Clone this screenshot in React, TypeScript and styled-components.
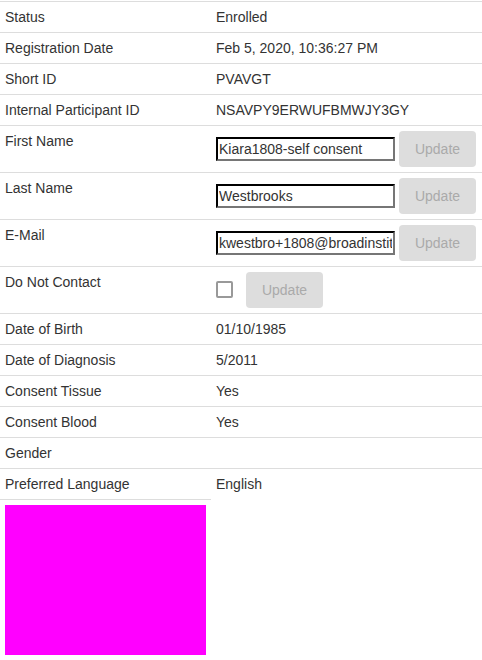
import React from "react";
import styled, { createGlobalStyle } from "styled-components";

const Global = createGlobalStyle`
  html, body { margin: 0; padding: 0; background: #fff; }
  body { font-family: "Liberation Sans", Arial, sans-serif; font-size: 14px; color: #333; }
`;

const Table = styled.table`
  width: 482px;
  margin-top: 1px;
  border-collapse: collapse;
  border-spacing: 0;
  font-size: 14px;
  line-height: 20px;
  color: #333;
`;

const Label = styled.td`
  width: 201px;
  padding: 5px;
  border-top: 1px solid #ddd;
  vertical-align: top;
  text-align: left;
`;

const Value = styled.td<{ $tall?: boolean }>`
  padding: ${(p) => (p.$tall ? "5px" : "5px")};
  border-top: 1px solid #ddd;
  vertical-align: top;
  text-align: left;
  white-space: nowrap;
`;

const ImageCell = styled.td`
  padding: 5px;
  border-top: 1px solid #ddd;
  vertical-align: top;
`;

const Controls = styled.div`
  display: flex;
  align-items: center;
  gap: 4px;
  height: 36px;
`;

const TextInput = styled.input`
  box-sizing: border-box;
  width: 179px;
  height: 24px;
  padding: 0 1px;
  margin: 0;
  border: 2px inset #767676;
  border-color: #333 #767676 #767676 #333;
  font-family: "Liberation Sans", Arial, sans-serif;
  font-size: 14px;
  color: #333;
  background: #fff;
`;

const Checkbox = styled.span`
  box-sizing: border-box;
  display: inline-block;
  width: 17px;
  height: 17px;
  border: 2px solid #999;
  border-radius: 2px;
  background: #fff;
  margin-right: 9px;
  margin-top: -2px;
`;

const UpdateButton = styled.button`
  box-sizing: border-box;
  width: 77px;
  height: 36px;
  border: none;
  border-radius: 4px;
  background: #dddddd;
  color: #aaa;
  font-family: "Liberation Sans", Arial, sans-serif;
  font-size: 14px;
  padding: 0;
`;

const Swatch = styled.div`
  width: 201px;
  height: 150px;
  background: #ff00ff;
`;

const plain: [string, string][] = [
  ["Status", "Enrolled"],
  ["Registration Date", "Feb 5, 2020, 10:36:27 PM"],
  ["Short ID", "PVAVGT"],
  ["Internal Participant ID", "NSAVPY9ERWUFBMWJY3GY"],
];

const editable: [string, string][] = [
  ["First Name", "Kiara1808-self consent"],
  ["Last Name", "Westbrooks"],
  ["E-Mail", "kwestbro+1808@broadinstitute.org"],
];

const tail: [string, string][] = [
  ["Date of Birth", "01/10/1985"],
  ["Date of Diagnosis", "5/2011"],
  ["Consent Tissue", "Yes"],
  ["Consent Blood", "Yes"],
  ["Gender", ""],
  ["Preferred Language", "English"],
];

export default function App() {
  return (
    <>
      <Global />
      <Table>
        <tbody>
          {plain.map(([k, v]) => (
            <tr key={k}>
              <Label>{k}</Label>
              <Value>{v}</Value>
            </tr>
          ))}
          {editable.map(([k, v]) => (
            <tr key={k}>
              <Label>{k}</Label>
              <Value $tall>
                <Controls>
                  <TextInput defaultValue={v} />
                  <UpdateButton>Update</UpdateButton>
                </Controls>
              </Value>
            </tr>
          ))}
          <tr>
            <Label>Do Not Contact</Label>
            <Value $tall>
              <Controls>
                <Checkbox />
                <UpdateButton>Update</UpdateButton>
              </Controls>
            </Value>
          </tr>
          {tail.map(([k, v]) => (
            <tr key={k}>
              <Label>{k}</Label>
              <Value>{v}</Value>
            </tr>
          ))}
          <tr>
            <ImageCell>
              <Swatch />
            </ImageCell>
          </tr>
        </tbody>
      </Table>
    </>
  );
}
